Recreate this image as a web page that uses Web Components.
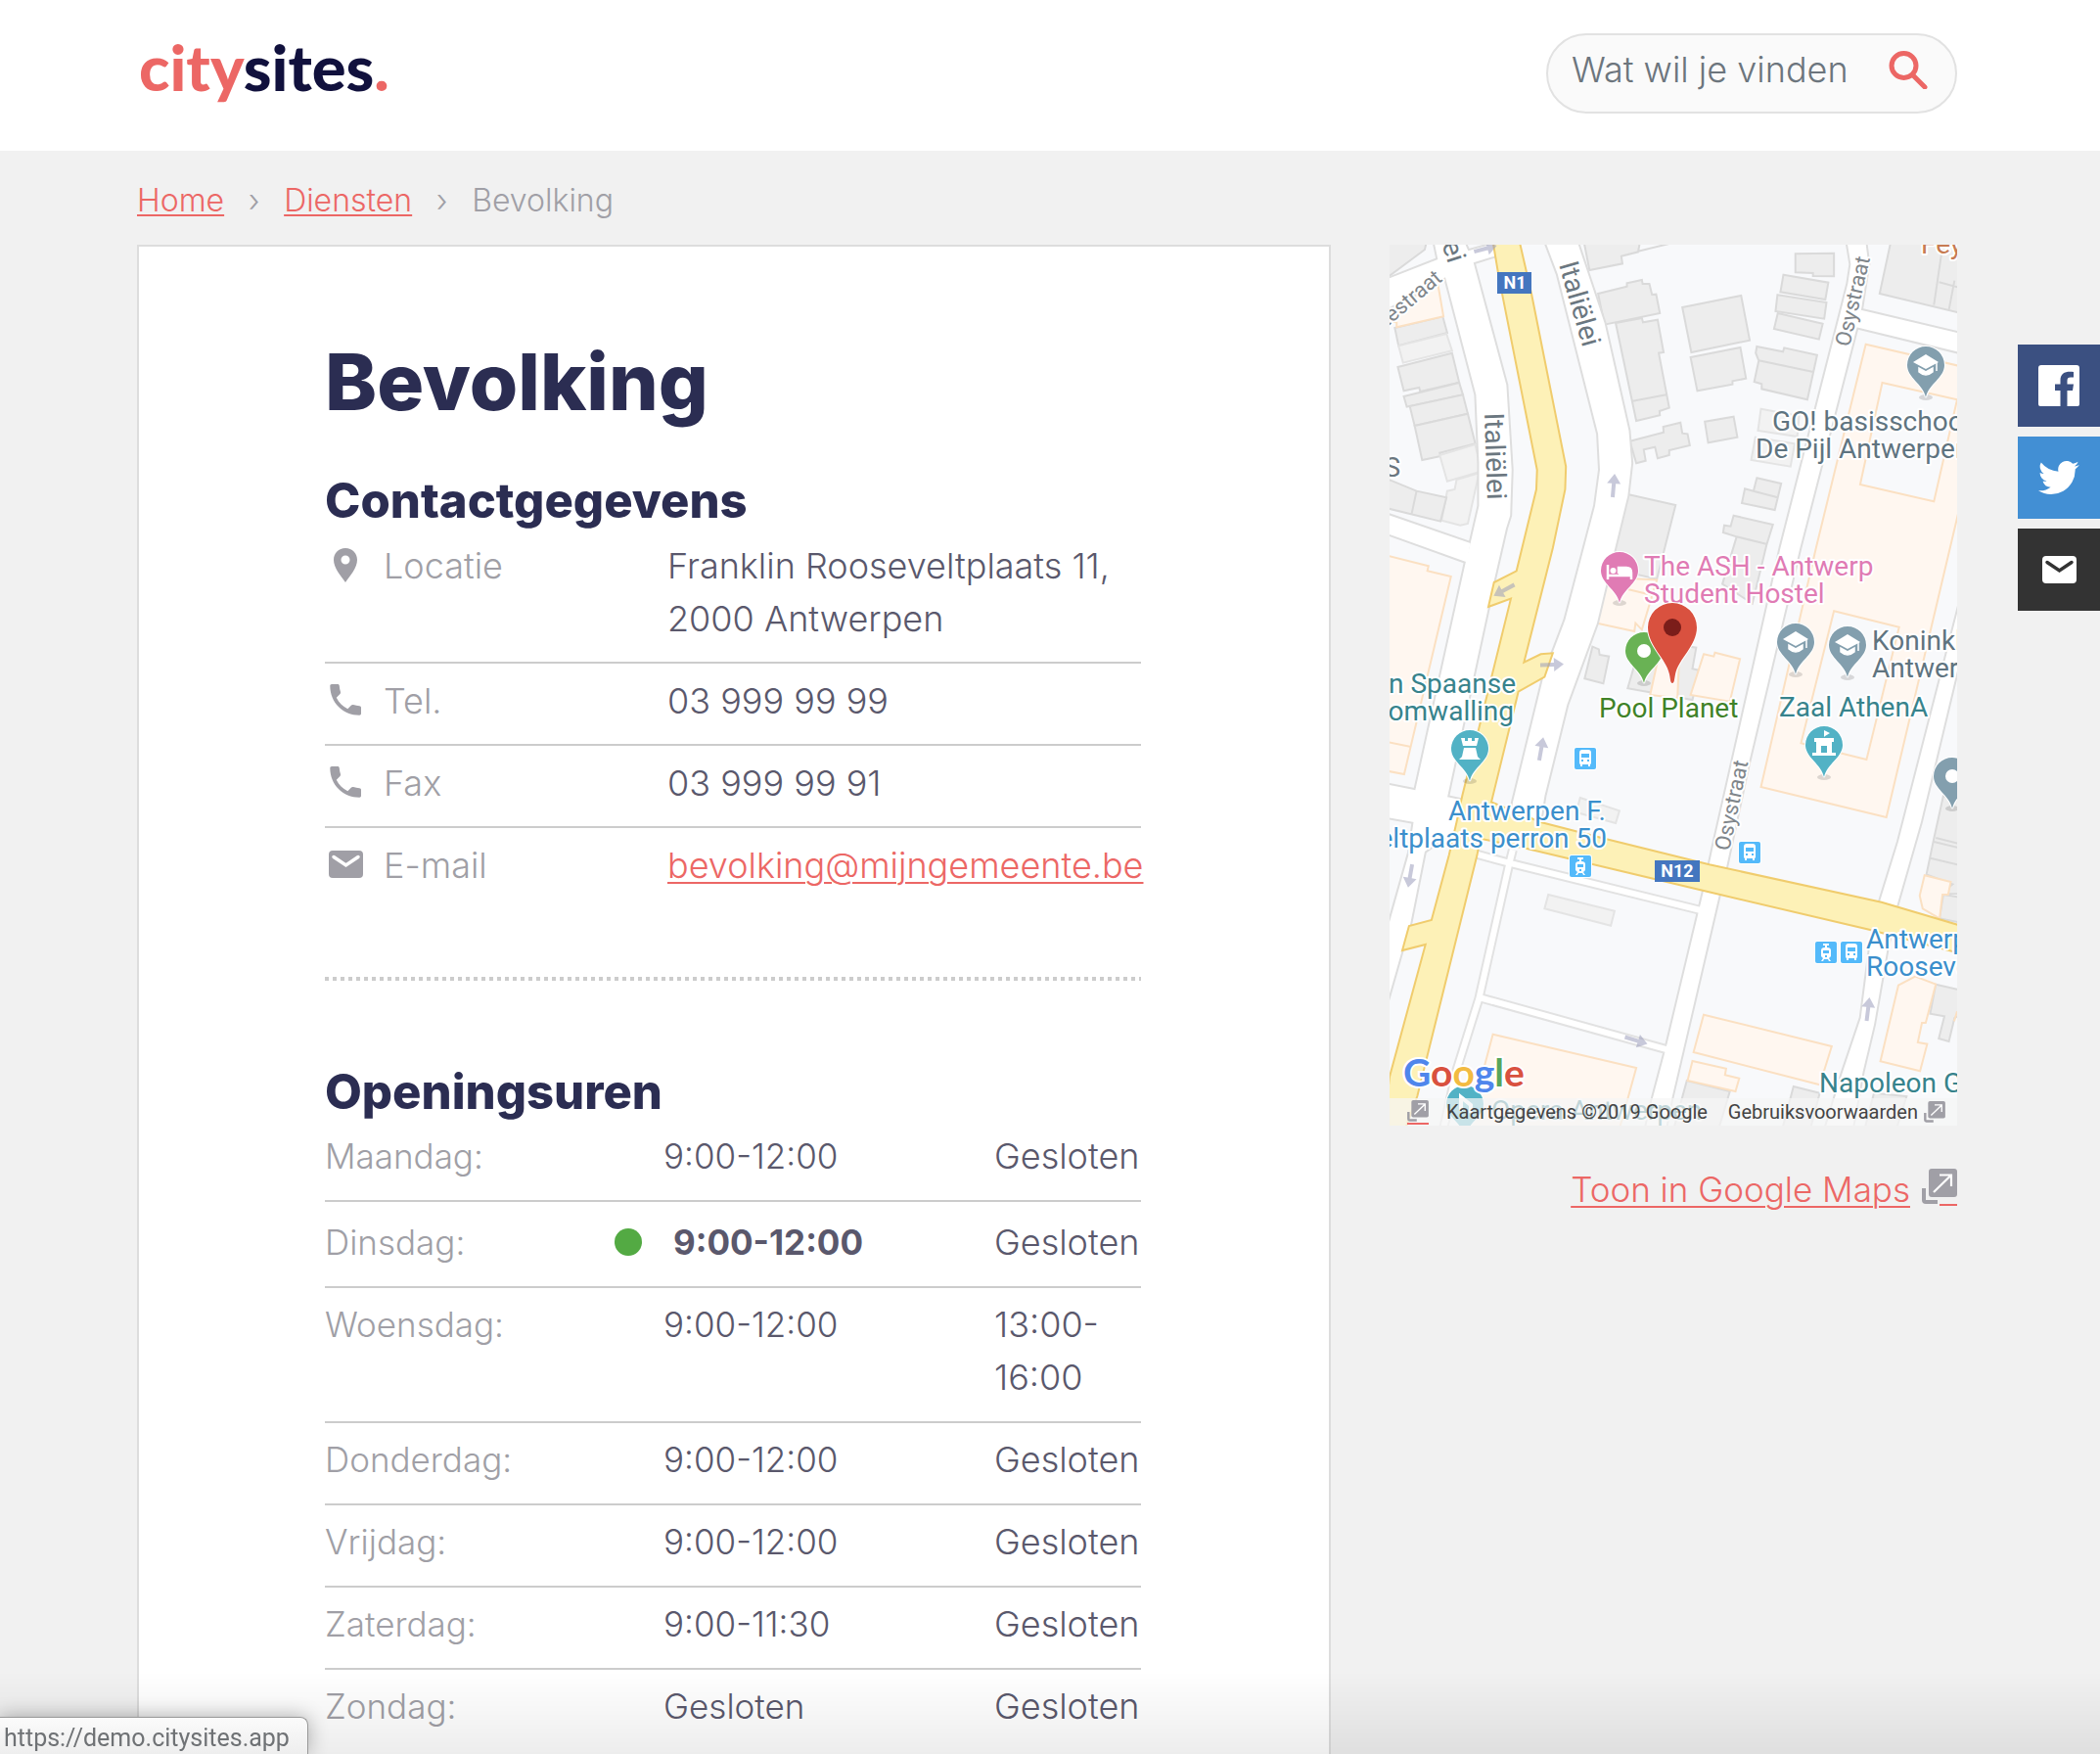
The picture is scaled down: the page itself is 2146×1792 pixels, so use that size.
<!DOCTYPE html>
<html lang="nl">
<head>
<meta charset="utf-8">
<title>Bevolking - citysites</title>
<meta name="viewport" content="width=device-width, initial-scale=1">
<style>
:root{--accent:#ec6765;--navy:#2b2d52;--ink:#5a586c;--muted:#a09fa6;--line:#ccc}
html,body{margin:0;height:100%}
body{background:#f1f1f1;color:var(--ink);font:300 36px/54px Inter,"Open Sans",sans-serif}
</style>
</head>
<body>
<city-page>
  <city-header slot="header"></city-header>
  <crumb-trail slot="crumbs"></crumb-trail>
  <content-card slot="main">
    <span slot="title">Bevolking</span>
    <contact-list></contact-list>
    <opening-hours></opening-hours>
  </content-card>
  <area-map slot="side"></area-map>
  <share-bar slot="float"></share-bar>
  <status-bubble slot="float">https://demo.citysites.app</status-bubble>
</city-page>

<script>
const define = (name, html) => {
  const tpl = document.createElement('template');
  tpl.innerHTML = html;
  customElements.define(name, class extends HTMLElement {
    constructor() {
      super();
      this.attachShadow({ mode: 'open' }).append(tpl.content.cloneNode(true));
    }
  });
};

const icons = {
  pin: ['0 0 36 36', '<path fill="currentColor" fill-rule="evenodd" d="M18 1C11 1 6 6 6 13c0 8 7 16 12 23 5-7 12-15 12-23C30 6 25 1 18 1Zm0 7.500a4.500 4.500 0 1 1 0 9 4.500 4.500 0 0 1 0-9Z"/>'],
  phone: ['0 0 36 36', '<path fill="currentColor" d="M4 2h6c1 0 1.700.700 1.800 1.700.200 2.300.500 4.400 1.200 6.300.200.700 0 1.500-.500 2l-3.700 3.700C11.500 21 15 24.500 20.300 27.200L24 23.500c.500-.500 1.300-.700 2-.500 2 .700 4.200 1.100 6.300 1.200 1 0 1.700.800 1.700 1.800v6c0 1-.800 1.700-1.700 1.700C15.500 33.700 2.300 20.500 2.300 3.700 2.300 2.800 3 2 4 2Z"/>'],
  mail: ['0 0 36 36', '<rect x="1" y="4" width="35" height="28" rx="4" fill="currentColor"/><path d="M6 10.500 18.500 19 31 10.500" fill="none" stroke="var(--fold,#fff)" stroke-width="3.500" stroke-linecap="round" stroke-linejoin="miter"/>'],
  external: ['0 0 36 38', '<rect x="7" width="29" height="29" rx="3" fill="#a09fa6"/><path d="M2 20v12q0 2 2 2h12" fill="none" stroke="#a09fa6" stroke-width="4"/><path d="M12 24 30 6.500M18 6.500h12V18" fill="none" stroke="#fff" stroke-width="2.200"/>'],
  search: ['0 0 40 40', '<circle cx="15.500" cy="16" r="12.500" fill="none" stroke="currentColor" stroke-width="5"/><path d="m26 27 11 11" stroke="currentColor" stroke-width="5" stroke-linecap="round"/>'],
  facebook: ['0 0 42 42', '<path fill="currentColor" d="M3 0h36q3 0 3 3v37q0 2-2 2H29.500V26H35l1-6.500h-6.500V16c0-2.500 1-3.500 3.500-3.500h3V7c-8-1-13.500 1-13.500 8.500v4H17V26h5.500v16H2q-2 0-2-2V3q0-3 3-3Z"/>'],
  twitter: ['0 0 24 24', '<path fill="currentColor" d="M23.900 4.600a10 10 0 0 1-2.800.800 5 5 0 0 0 2.100-2.700 10 10 0 0 1-3.100 1.200 4.900 4.900 0 0 0-8.400 4.500A14 14 0 0 1 1.600 3.200 4.900 4.900 0 0 0 3.200 9.700a5 5 0 0 1-2.300-.6 4.900 4.900 0 0 0 4 4.900 5 5 0 0 1-2.300.100 4.900 4.900 0 0 0 4.600 3.400A9.900 9.900 0 0 1 0 19.500a14 14 0 0 0 21.500-12.400 10 10 0 0 0 2.400-2.500Z"/>']
};
customElements.define('ui-icon', class extends HTMLElement {
  constructor() {
    super();
    this.attachShadow({ mode: 'open' });
  }
  connectedCallback() {
    const [box, body] = icons[this.getAttribute('name')];
    this.shadowRoot.innerHTML = `<style>:host{display:inline-block;width:36px;height:36px;line-height:0}svg{width:100%;height:100%;display:block}</style><svg viewBox="${box}" aria-hidden="true">${body}</svg>`;
  }
});

define('city-page', `
<style>
:host{display:block;height:100vh;overflow-y:auto;scrollbar-width:none}
main{padding:24px 146px 0 140px}
.cols{display:grid;grid-template-columns:minmax(0,61fr) minmax(0,29fr);gap:60px;align-items:start;margin-top:18px}
.shade{position:fixed;left:0;right:0;bottom:0;height:84px;background:linear-gradient(rgba(0,0,0,0),rgba(0,0,0,.07));pointer-events:none}
</style>
<slot name="header"></slot>
<main>
  <slot name="crumbs"></slot>
  <div class="cols"><slot name="main"></slot><slot name="side"></slot></div>
</main>
<div class="shade"></div>
<slot name="float"></slot>`);

define('site-logo', `
<style>
:host{display:block}
a{display:block;font:900 65px/68px Lato,sans-serif;color:#11113d;text-decoration:none}
b{font-weight:inherit;color:var(--accent)}
</style><a href="#home"><b>city</b>sites<b>.</b></a>`);

define('search-box', `
<style>
:host{display:block;width:420px}
form{display:flex;align-items:center;height:82px;box-sizing:border-box;border:2px solid #e2e2e2;border-radius:41px;background:#fafafa;padding:0 28px 8px 24px}
input{flex:1;min-width:0;border:0;background:none;outline:0;padding:0;font:inherit;color:var(--ink)}
input::placeholder{color:#6c757d;opacity:1}
button{border:0;background:none;padding:0;color:var(--accent);line-height:0}
ui-icon{width:40px;height:40px}
</style>
<form><input type="text" aria-label="Zoeken" placeholder="Wat wil je vinden"><button type="button" aria-label="Zoek"><ui-icon name="search"></ui-icon></button></form>`);

define('city-header', `
<style>
:host{display:block;background:#fff}
header{display:flex;justify-content:space-between;align-items:flex-start;box-sizing:border-box;height:154px;padding:34px 146px 0 142px}
</style>
<header><site-logo></site-logo><search-box></search-box></header>`);

define('crumb-trail', `
<style>
:host{display:block}
ol{display:flex;list-style:none;margin:0;padding:0;font-size:32px;line-height:54px;color:var(--muted)}
li+li::before{content:"›";display:inline-block;width:61px;text-align:center}
a{color:var(--accent);text-underline-offset:3px;text-decoration-thickness:2px}
</style>
<nav aria-label="Kruimelpad"><ol><li><a href="#home">Home</a></li><li><a href="#diensten">Diensten</a></li><li>Bevolking</li></ol></nav>`);

define('content-card', `
<style>
:host{display:block;box-sizing:border-box;background:#fff;border:2px solid #ddd;padding:90px 192px 120px 190px}
h1{margin:0;font-size:80px;line-height:96px;font-weight:800;color:var(--navy)}
</style>
<h1><slot name="title"></slot></h1><slot></slot>`);

define('contact-list', `
<style>
:host{display:block;padding-bottom:74px;background:repeating-linear-gradient(90deg,var(--line) 0 4px,transparent 4px 8px) left bottom/100% 4px no-repeat}
h2{margin:42px 0 7px;font-size:49px;line-height:64px;font-weight:800;color:var(--navy)}
dl{margin:0}
dl>div{display:grid;grid-template-columns:350px 1fr;padding:11px 0 17px;border-bottom:2px solid var(--line)}
dl>div:first-child{padding-top:0}
dl>div:last-child{border:0}
dt{display:flex;align-items:flex-start;gap:21px;padding-left:3px;color:var(--muted)}
ui-icon{margin-top:8px}
dd{margin:0}
a{color:var(--accent);text-underline-offset:4px;text-decoration-thickness:2px}
</style>
<h2>Contactgegevens</h2>
<dl>
<div><dt><ui-icon name="pin"></ui-icon>Locatie</dt><dd>Franklin Rooseveltplaats 11,<br>2000 Antwerpen</dd></div>
<div><dt><ui-icon name="phone"></ui-icon>Tel.</dt><dd>03 999 99 99</dd></div>
<div><dt><ui-icon name="phone"></ui-icon>Fax</dt><dd>03 999 99 91</dd></div>
<div><dt><ui-icon name="mail"></ui-icon>E-mail</dt><dd><a href="mailto:bevolking@mijngemeente.be">bevolking@mijngemeente.be</a></dd></div>
</dl>`);

define('opening-hours', `
<style>
:host{display:block}
h2{margin:82px 0 6px;font-size:49px;line-height:64px;font-weight:800;color:var(--navy)}
table{width:100%;border-collapse:collapse;table-layout:fixed}
th,td{padding:10px 0 18px;text-align:left;vertical-align:top;font-size:35px;line-height:54px;font-weight:300;border-bottom:2px solid var(--line)}
tr:first-child>*{padding-top:0}
tr:last-child>*{border:0}
th{color:var(--muted);width:346px}
td:last-child{width:150px;font-size:36px}
.now>*{padding:14px 0 18px}
.now td:nth-child(2){font-weight:700}
.now td:nth-child(2) span{display:flex;align-items:center;gap:32px;margin-left:-50px}
.now span::before{content:"";width:28px;height:28px;border-radius:50%;background:#53aa43}
</style>
<h2>Openingsuren</h2>
<table>
<tr><th scope="row">Maandag:</th><td>9:00-12:00</td><td>Gesloten</td></tr>
<tr class="now"><th scope="row">Dinsdag:</th><td><span>9:00-12:00</span></td><td>Gesloten</td></tr>
<tr><th scope="row">Woensdag:</th><td>9:00-12:00</td><td>13:00-<br>16:00</td></tr>
<tr><th scope="row">Donderdag:</th><td>9:00-12:00</td><td>Gesloten</td></tr>
<tr><th scope="row">Vrijdag:</th><td>9:00-12:00</td><td>Gesloten</td></tr>
<tr><th scope="row">Zaterdag:</th><td>9:00-11:30</td><td>Gesloten</td></tr>
<tr><th scope="row">Zondag:</th><td>Gesloten</td><td>Gesloten</td></tr>
</table>`);

define('share-bar', `
<style>
:host{position:fixed;right:0;top:352px;display:grid;gap:10px}
a{display:flex;width:84px;height:84px;align-items:center;justify-content:center;color:#fff;background:#3b5081}
.tw{background:#428fd4}
.ml{background:#333;--fold:#333}
ui-icon{width:42px;height:42px}
.ml ui-icon{width:36px;height:36px}
</style>
<a href="#facebook" aria-label="Facebook"><ui-icon name="facebook"></ui-icon></a>
<a class="tw" href="#twitter" aria-label="Twitter"><ui-icon name="twitter"></ui-icon></a>
<a class="ml" href="#mail" aria-label="E-mail"><ui-icon name="mail"></ui-icon></a>`);

define('status-bubble', `
<style>
:host{position:fixed;left:0;bottom:0;box-sizing:border-box;height:38px;padding:2px 18px 0 4px;border:solid #999;border-width:1px 1px 0 0;border-radius:0 8px 0 0;background:linear-gradient(#fbfbfb,#eee);color:#6f7275;font:400 25px/38px Roboto,sans-serif;box-shadow:0 0 20px rgba(0,0,0,.3)}
</style><slot></slot>`);

const pinShape = 'M0 0C-3-14-19-20-19-33A19 19 0 1 1 19-33C19-20 3-14 0 0Z';
const pin = (x, y, color, glyph) => `<g transform="translate(${x} ${y})"><ellipse rx="7" ry="3" fill="#0002"/><path d="${pinShape}" fill="${color}" stroke="#fff" stroke-width="2" paint-order="stroke"/>${glyph}</g>`;
const cap = '<path d="m-13-36 13-8 13 8-13 7Z" fill="#fff"/><path d="M-7-30v4q7 6 14 0v-4l-7 4ZM11-36v9" fill="#fff" stroke="#fff" stroke-width="1.500"/>';
const hole = '<circle cy="-33" r="7" fill="#fff"/>';
const bed = '<path d="M-12-39v15M-12-28h24M12-24v-7q0-5-5-5h-8v6" fill="none" stroke="#fff" stroke-width="2.500"/><circle cx="-6.500" cy="-33" r="3" fill="#fff"/><path d="M-1-36h8q5 0 5 5v3H-1Z" fill="#fff"/>';
const tower = '<path d="M-9-44h4v3h3v-3h4v3h3v-3h4l-2 8H-7ZM-6-34H6l2 9 3 3h-22l3-3Z" fill="#fff"/>';
const fort = '<path fill-rule="evenodd" d="M-10-40h20v4H8v11h4v3h-24v-3h4v-11h-2ZM-3-32v7h6v-7ZM0-41v-7l6 3-5 3Z" fill="#fff"/>';
const sq = '<rect width="22" height="22" rx="2" fill="#54bafa" stroke="#fff" stroke-width="2" paint-order="stroke"/>';
const bus = (x, y) => `<g transform="translate(${x} ${y})">${sq}<path fill="#fff" fill-rule="evenodd" d="M8 2h6q3 0 3 3v11l-1 1v2h-2v-2H8v2H6v-2l-1-1V5q0-3 3-3ZM7 6v4h8V6Zm0 6v2h2v-2Zm6 0v2h2v-2Z"/></g>`;
const tram = (x, y) => `<g transform="translate(${x} ${y})">${sq}<path fill="#fff" fill-rule="evenodd" d="M8 2h6v2h-2v2q4 0 4 3v6l-2 2 2 3h-2l-1-2H9l-1 2H6l2-3-2-2V9q0-3 4-3V4H8ZM8 9v3h6V9Zm2 5v2h2v-2Z"/></g>`;
const arrow = (x, y, deg) => `<path transform="translate(${x} ${y}) rotate(${deg})" d="M-2 12V-2h-5L0-12 7-2H2V12Z" fill="#9a9cbc" fill-opacity=".55"/>`;

define('area-map', `
<style>
:host{display:block}
figure{position:relative;margin:0;height:900px;overflow:hidden;background:#f8f9fb}
.chart{display:block;width:100%;height:100%}
.geo *{vector-effect:non-scaling-stroke}
.labels{font:400 28px Roboto,sans-serif;stroke:#fff;stroke-width:4px;stroke-linejoin:round;paint-order:stroke}
.small{font-size:22px}
.pale{fill:#f2f2f2;stroke:#e4e4e4}
.badges{font:700 18px Roboto,sans-serif;fill:#fff;text-anchor:middle}
.brand{position:absolute;left:14px;bottom:33px;font:700 39px/44px Lato,sans-serif;text-decoration:none;color:#4f86ec;-webkit-text-stroke:4px #fff;paint-order:stroke}
figcaption{position:absolute;left:0;right:0;bottom:0;height:28px;display:flex;align-items:center;gap:18px;padding:0 12px 0 18px;background:rgba(245,245,245,.72);font:400 20px/26px Roboto,sans-serif;color:#444}
figcaption a{color:inherit;text-decoration:none;display:flex;align-items:center;gap:6px}
figcaption a:last-child{margin-left:auto}
figcaption ui-icon{width:22px;height:23px}
figcaption .open{border-bottom:2px solid var(--accent)}
p{margin:38px 0 0;text-align:right;font-size:35px}
p a{color:var(--accent);text-underline-offset:4px;text-decoration-thickness:2px}
p ui-icon{height:38px;margin-left:12px;vertical-align:-4px;background:linear-gradient(var(--accent),var(--accent)) right bottom/18px 2px no-repeat}
</style>
<figure>
<svg class="chart" viewBox="0 0 580 900" preserveAspectRatio="xMidYMid slice" role="img" aria-label="Kaart">
<svg class="geo" width="580" height="900" viewBox="26 30 1516 2700" preserveAspectRatio="none">
<defs>
<g id="streets">
<path d="M145 20 155 75 175 130 257 490 265 700 265 830 242 945 230 1000 95 1700 90 1800 78 1895 20 2130 20 2350 60 2190 80 2120 120 1890 205 1820 180 1725 290 1140 305 1060 337 900 348 860 352 720 338 460 250 85 225 20Z"/>
<path d="M10 853 242 945 232 1003 10 911Z"/>
<path d="M10 1682 95 1702 230 1735 205 1820 92 1800 10 1783Z"/>
<path d="M10 140 155 75 310 25 320 60 250 85 175 130 10 232Z"/>
<path d="M442 20 475 120 583 610 588 720 575 830 550 940 495 1180 437 1355 355 1740 350 1830 425 1830 440 1720 500 1440 580 1190 628 960 662 800 672 700 665 600 600 270 527 20Z"/>
<path d="M1248 20 1258 90 1250 150 1070 960 960 1520 893 1860 865 2010 765 2490 728 2650 710 2740 763 2740 780 2645 907 2020 925 1940 985 1620 1122 960 1285 235 1305 90 1297 20Z"/>
<path d="M1285 230 1560 305 1560 363 1273 283Z"/>
<path d="M1560 1080 1385 1860 1335 2045 1308 2195 1285 2400 1235 2570 1190 2740 1262 2740 1290 2565 1320 2420 1355 2190 1380 2060 1445 1800 1560 1250Z"/>
</g>
<g id="lanes" fill="none"><path d="M258 1898 345 1925 857 2070"/><path d="M355 1885 345 1930 265 2340 205 2560 170 2740"/><path d="M265 2337 768 2497"/></g>
</defs>
<rect x="26" y="30" width="1516" height="2700" fill="#f8f9fb"/>
<g fill="#ededed" stroke="#dadada" stroke-width="2">
<path d="M20 20H125L120 45 20 130Z"/><path d="M40 285 168 250 180 300 50 340Z"/><path class="pale" d="M50 340 178 303 193 355 62 392Z"/><path d="M48 405 193 362 212 452 108 480 105 468 64 478Z"/><path d="M64 495 212 453 222 490 72 527Z"/><path d="M80 525 222 490 235 548 93 585Z"/><path d="M93 585 235 548 255 640 160 668 163 678 113 690Z"/><path class="pale" d="M160 675 255 642 270 725 180 755Z"/><path class="pale" d="M205 750 265 730 235 885 215 890 165 875 180 785 200 780Z"/><path d="M20 748 98 785 178 805 162 878 20 838ZM98 785 85 855"/>
<path d="M545 20 695 20 690 52 645 65 648 88 560 108ZM690 50 780 25"/><path d="M583 180 660 158 660 148 700 138 702 150 720 150 727 183 738 182 748 240 600 275Z"/><path d="M630 270 700 255 703 268 742 260 758 360 745 362 773 530 747 540 748 553 685 570ZM672 510 765 490"/><path d="M808 222 965 186 988 323 832 360Z"/><path d="M830 375 963 345 978 440 942 448 942 458 848 478Z"/><path d="M868 572 945 557 955 620 877 637Z"/><path d="M668 632 758 605 757 588 803 575 808 608 822 610 828 645 773 660 773 675 742 685 735 650 705 658 710 692 685 700Z"/><path d="M662 795 790 828 740 1055 610 1020Z"/>
<path d="M1110 58 1213 56 1213 127 1157 126 1157 117 1110 115Z"/><path d="M1078 122 1198 146 1190 198 1070 175Z"/><path d="M1062 184 1193 207 1187 257 1057 234Z"/><path d="M1063 240 1183 272 1173 320 1053 288Z"/><path d="M1007 342 1077 358 1080 346 1168 368 1142 505 1020 472 1020 457 1000 450 1012 385 1004 362ZM1012 385 1158 420"/><path class="pale" d="M1018 533 1120 555 1115 618 1010 600Z"/><path class="pale" d="M1003 620 1108 640 1097 710 992 690Z"/><path d="M1007 745 1072 762 1055 843 967 822 975 778 998 785ZM998 785 1063 805"/><path d="M945 860 1050 888 1033 950 995 1130 915 1070 953 925 917 912 920 890 937 893ZM953 925 1035 948"/><path d="M1365 20H1560V242L1335 180ZM1505 20 1480 215M1494 145 1560 165M1535 140 1520 230"/>
<path d="M568 1262 585 1270 587 1287 612 1292 597 1375 547 1360Z"/><path d="M700 1240 845 1265 835 1330 855 1335 835 1425 662 1390Z"/><path d="M1505 1720 1560 1740V2020H1500L1530 1990 1460 1960 1480 1850ZM1485 1848 1560 1870M1480 1860 1560 1882M1470 1910 1560 1935"/><path d="M1505 2022 1560 2032V2110L1495 2095Z"/><path d="M1485 2297 1560 2317V2385L1535 2400 1520 2472 1493 2463 1508 2395 1470 2387Z"/><path class="pale" d="M450 2022 627 2072 617 2117 440 2065Z"/><path class="pale" d="M535 1725 640 1765 630 1803 525 1770Z"/><path d="M820 2592 935 2625 905 2740 785 2740Z"/><path d="M1105 2610 1175 2630 1150 2740 1075 2740Z"/><path d="M1320 2630 1407 2640 1380 2740 1295 2740Z"/>
</g>
<g fill="#fff7f0" stroke="#fbe0c2" stroke-width="2">
<path d="M155 150 170 250 45 283 45 268 20 265 20 235Z"/><path d="M1298 335 1560 405 1560 780 1353 1785 1018 1692 1165 960Z"/><path fill="#f8f9fb" d="M1342 453 1542 505 1480 817 1283 765Z"/><path fill="#f8f9fb" d="M1213 1153 1387 1202 1300 1608 1125 1558Z"/><path d="M20 983 130 1015 127 1030 190 1047 65 1653 20 1643ZM20 1554 80 1568"/><path d="M605 1050 740 1057 700 1210 683 1190 680 1215 580 1190ZM640 1080 730 1105"/><path d="M745 1290 800 1290 795 1420 722 1410Z"/><path d="M865 1285 892 1292 895 1280 962 1300 935 1430 830 1410Z"/><path d="M302 2450 685 2553 640 2740 235 2740Z"/><path d="M865 2390 1207 2487 1175 2605 838 2505Z"/><path d="M835 2532 925 2555 922 2575 960 2585 950 2625 822 2592Z"/><path d="M1385 2300 1430 2273 1485 2297 1458 2415 1448 2415 1437 2475 1462 2480 1443 2563 1337 2533Z"/><path d="M1455 1963 1525 1983 1518 2022 1503 2022 1495 2095 1450 2065 1442 2025Z"/><path d="M1542 2380 1534 2410"/>
</g>
<use href="#streets" stroke="#dedede" stroke-width="4"/>
<use href="#lanes" stroke="#e2e2e2" stroke-width="10"/>
<use href="#streets" fill="#fff"/>
<use href="#lanes" stroke="#fff" stroke-width="6"/>
<path fill="#fdf1b7" stroke="#f0cc6d" stroke-width="2" d="M302 20 318 130 420 720 418 780 365 1030 305 1065 290 1140 350 1115 220 1720 205 1800 185 1900 138 2100 78 2118 60 2193 122 2175 26 2580 10 2740 68 2740 100 2640 260 1900 268 1850 390 1880 865 2010 1310 2130 1560 2205 1560 2120 1340 2045 880 1930 600 1850 430 1800 298 1738 370 1400 440 1355 462 1282 430 1285 385 1310 462 960 495 780 497 710 405 180 373 20Z"/>
</svg>
${arrow(98, 4, 75)}${arrow(229, 246, 5)}${arrow(117, 353, 242)}${arrow(166, 429, 88)}${arrow(155, 515, 10)}${arrow(21, 645, 190)}${arrow(252, 813, 107)}${arrow(489, 781, 7)}
<g class="labels" fill="#6b7780">
<text transform="translate(173 20) rotate(74)">Italiëlei</text>
<text transform="translate(97 172) rotate(88)">Italiëlei</text>
<text transform="translate(60 20) rotate(72)" text-anchor="end">Italiëlei</text>
<g class="small" fill="#80868b"><text transform="translate(470 105) rotate(-77)">Osystraat</text><text transform="translate(347 620) rotate(-78)">Osystraat</text><text transform="translate(55 36) rotate(-40)" text-anchor="end">Gemeentestraat</text></g>
<text x="11" y="237" text-anchor="end">S</text>
<text x="543" y="9" fill="#c77b52">Feyz</text>
</g>
${pin(548, 156, '#839fae', cap)}${pin(415, 439, '#839fae', cap)}${pin(468, 442, '#839fae', cap)}${pin(575, 576, '#839fae', hole)}
${pin(235, 366, '#e07bb4', bed)}${pin(260, 448, '#69b254', hole)}${pin(82, 548, '#52b2c5', tower)}${pin(444, 544, '#52b2c5', fort)}
${pin(77, 911, '#52b2c5', '<path d="M-4-26v-14l10 8v8" fill="none" stroke="#fff" stroke-width="4"/>')}
<g class="labels">
<g fill="#5f7480"><text x="391" y="190">GO! basisschool</text><text x="374" y="218">De Pijl Antwerpen</text><text x="493" y="414">Koninklijk</text><text x="493" y="442">Antwerpen</text></g>
<g fill="#e07bb4"><text x="260" y="338">The ASH - Antwerp</text><text x="260" y="366">Student Hostel</text></g>
<g fill="#37838c"><text x="398" y="482">Zaal AthenA</text><text x="129" y="458" text-anchor="end">Van Spaanse</text><text x="127" y="486" text-anchor="end">Boomwalling</text><text x="439" y="866">Napoleon Games</text><text x="104" y="894">Opera Antwerpen</text></g>
<text x="214" y="483" fill="#3f8228">Pool Planet</text>
<g fill="#3b8fcc"><text x="221" y="588" text-anchor="end">Antwerpen F.</text><text x="222" y="616" text-anchor="end">Rooseveltplaats perron 50</text><text x="487" y="719">Antwerpen</text><text x="487" y="747">Roosevelt</text></g>
</g>
<path transform="translate(289 448)" fill="#d9513f" stroke="#fff" stroke-width="2" paint-order="stroke" d="M0 0C-2 0-2-4-3-9-6-25-25-38-25-57A25 25 0 1 1 25-57C25-38 6-25 3-9 2-4 2 0 0 0Z"/><circle cx="289" cy="391" r="9" fill="#7b1d1a"/>
${bus(189, 514)}${tram(184, 624)}${bus(357, 610)}${tram(435, 712)}${bus(461, 712)}
<g fill="#4476bf"><path d="M110 28h35v22h-35ZM271 629h46v22h-46Z"/></g>
<g class="badges"><text x="128" y="45">N1</text><text x="294" y="646">N12</text></g>
</svg>
<a class="brand" href="#google" aria-label="Google">G<span style="color:#d9513f">o</span><span style="color:#f2bb42">o</span>g<span style="color:#58a55c">l</span><span style="color:#d9513f">e</span></a>
<figcaption><a class="open" href="#open" aria-label="Openen"><ui-icon name="external"></ui-icon></a><span>Kaartgegevens ©2019 Google</span><a href="#voorwaarden">Gebruiksvoorwaarden<ui-icon name="external"></ui-icon></a></figcaption>
</figure>
<p><a href="#maps">Toon in Google Maps</a><ui-icon name="external"></ui-icon></p>`);
</script>
</body>
</html>
